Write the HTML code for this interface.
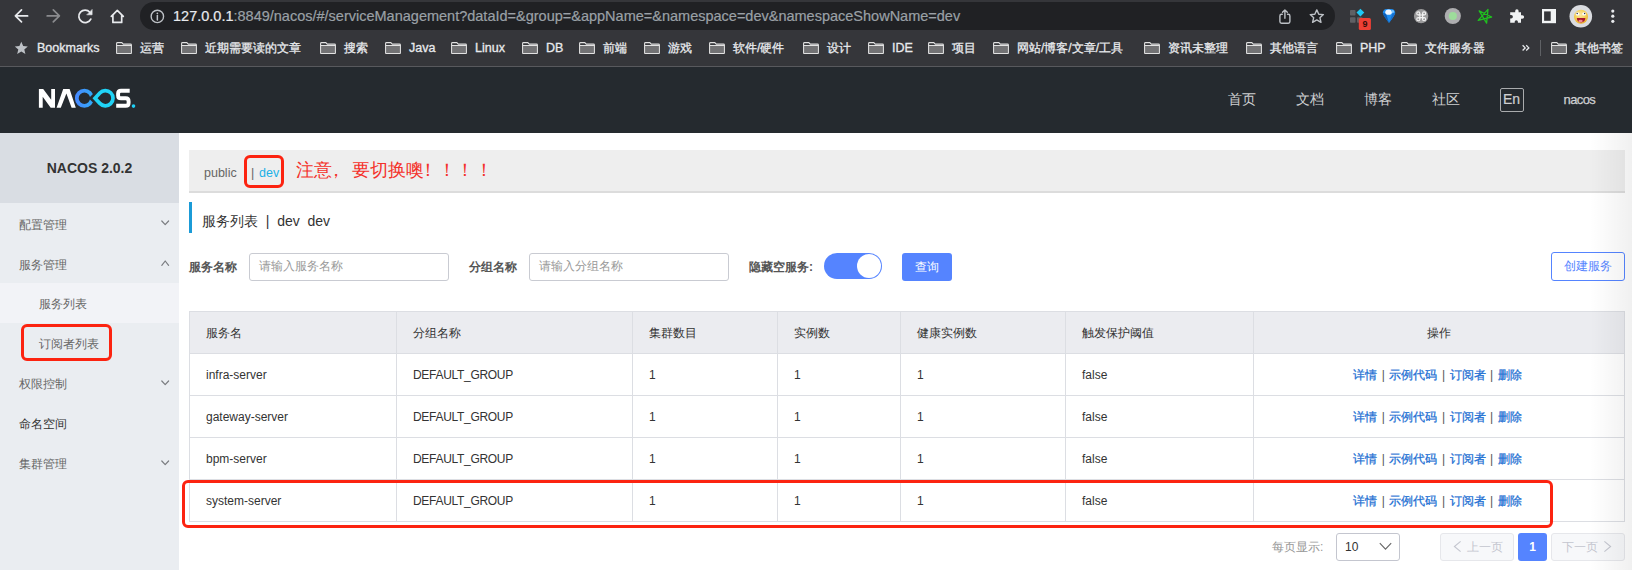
<!DOCTYPE html>
<html><head><meta charset="utf-8">
<style>
*{box-sizing:border-box;margin:0;padding:0}
html,body{width:1632px;height:570px;overflow:hidden;background:#fff;font-family:"Liberation Sans",sans-serif;position:relative}
.a{position:absolute;white-space:nowrap}
#tb{left:0;top:0;width:1632px;height:66px;background:#35363a}
#pill{left:140px;top:2px;width:1195px;height:28px;border-radius:14px;background:#202124}
#url{left:173px;top:4px;font-size:14.5px;line-height:24px;color:#9aa0a6;-webkit-text-stroke:0.2px #9aa0a6}
#url b{font-weight:normal;color:#e8eaed;-webkit-text-stroke:0.2px #e8eaed}
.bmt{top:40px;font-size:12px;line-height:16px;color:#e8eaed;-webkit-text-stroke:0.3px #e8eaed}
.bml{font-size:12.5px}
.fold{top:42px;width:16px;height:12px}
#sep{left:0;top:66px;width:1632px;height:1px;background:#58595d}
#hdr{left:0;top:67px;width:1632px;height:66px;background:#252a2f}
.nav{top:91px;font-size:14px;line-height:16px;color:#cfd0d2}
#side{left:0;top:133px;width:179px;height:437px;background:#eaedf1}
#sidetop{left:0;top:133px;width:179px;height:70px;background:#d9dde3}
#subsel{left:0;top:283px;width:179px;height:40px;background:#f2f3f7}
.sm{left:19px;font-size:12px;line-height:16px;color:#666}
.chev{left:161px;width:9px;height:6px}
#nsbar{left:189px;top:150px;width:1436px;height:43px;background:#eeeeee;border-bottom:2px solid #dcdcdc}
#titlebar{left:189px;top:202px;width:3px;height:30.5px;background:#1b9bd7}
.lbl{top:258.5px;font-size:12px;line-height:16px;color:#555;font-weight:bold}
.inp{top:253px;width:200px;height:28px;border:1px solid #c9cbd2;border-radius:3px;background:#fff}
.ph{top:258px;font-size:12px;line-height:16px;color:#999}
#toggle{left:824px;top:253px;width:58px;height:26px;border-radius:13px;background:#5584ff}
#knob{left:857px;top:254px;width:24px;height:24px;border-radius:12px;background:#fff}
#qbtn{left:902px;top:253px;width:50px;height:28px;border-radius:3px;background:#5584ff;color:#fff;font-size:12px;line-height:28px;text-align:center}
#cbtn{left:1551px;top:252px;width:74px;height:29px;border-radius:3px;border:1px solid #5584ff;background:#fff;color:#5584ff;font-size:12px;line-height:27px;text-align:center}
table{position:absolute;left:189px;top:311px;width:1436px;border-collapse:collapse;font-size:12px;color:#333;table-layout:fixed}
td,th{border:1px solid #dcdee3;height:42px;padding:1px 0 0 16px;text-align:left;font-weight:normal;white-space:nowrap}
th{background:#ebecf0;padding-top:1px}
.lk{color:#1d6fd3;-webkit-text-stroke:0.25px #1d6fd3}
.sp{margin:0 4.5px;color:#555}
.op{text-align:center;padding:1px 3px 0 0}
th.op{padding:1px 1px 0 0}
.rt{top:161px;font-size:18px;line-height:18px;color:#f4312a}
.redbox{border:3.3px solid #fc2310;border-radius:6px}
#shade{left:1590px;top:133px;width:42px;height:437px;background:linear-gradient(to right,rgba(0,0,0,0),rgba(0,0,0,0.06))}
</style></head><body>
<div id="tb" class="a"></div>
<div id="pill" class="a"></div>
<div id="url" class="a"><b>127.0.0.1</b>:8849/nacos/#/serviceManagement?dataId=&amp;group=&amp;appName=&amp;namespace=dev&amp;namespaceShowName=dev</div>
<!--BM-->
<svg class="a" style="left:0;top:0" width="1632" height="66" viewBox="0 0 1632 66">
<g fill="none" stroke-linecap="round" stroke-linejoin="round">
<path d="M27.6 15.9H15.6M21.5 9.9L15.4 15.9L21.5 21.9" stroke="#e8eaed" stroke-width="1.7"/>
<path d="M47.2 15.9H59.2M53.3 9.9L59.4 15.9L53.3 21.9" stroke="#8a8b8e" stroke-width="1.7"/>
<path d="M90.8 19.1A6.3 6.3 0 1 1 89.9 12.2" stroke="#e8eaed" stroke-width="1.7"/>
<path d="M92.1 9.8V14.8H87.1Z" fill="#e8eaed" stroke="#e8eaed" stroke-width="0.6"/>
<path d="M111.3 16.3L117.3 10.3L123.3 16.3M112.9 15.1V22.4H121.7V15.1" stroke="#e8eaed" stroke-width="1.7"/>
<circle cx="157.35" cy="16.45" r="6.2" stroke="#bdc1c6" stroke-width="1.4"/>
<path d="M157.35 15.6V19.9" stroke="#bdc1c6" stroke-width="1.5"/>
<circle cx="157.35" cy="13.3" r="0.9" fill="#bdc1c6" stroke="none"/>
<path d="M1282.3 14.3H1281.5Q1279.9 14.3 1279.9 15.9V21.6Q1279.9 23.2 1281.5 23.2H1288.3Q1289.9 23.2 1289.9 21.6V15.9Q1289.9 14.3 1288.3 14.3H1287.5" stroke="#bdc1c6" stroke-width="1.4"/>
<path d="M1284.9 18.3V10M1282.5 12.3L1284.9 9.9L1287.3 12.3" stroke="#bdc1c6" stroke-width="1.4"/>
<path d="M1316.8 9.9L1318.8 14.2L1323.4 14.6L1319.9 17.7L1321 22.3L1316.8 19.9L1312.6 22.3L1313.7 17.7L1310.2 14.6L1314.8 14.2Z" stroke="#bdc1c6" stroke-width="1.4"/>
</g>
<rect x="1350" y="10" width="5.5" height="5.6" rx="0.8" fill="#5f6064"/>
<rect x="1350" y="17.2" width="5.5" height="5.6" rx="0.8" fill="#5f6064"/>
<rect x="1357" y="17.2" width="5.5" height="5.6" rx="0.8" fill="#5f6064"/>
<path d="M1360.4 8.7L1364.3 12.6L1360.4 16.5L1356.5 12.6Z" fill="#1ec8f5"/>
<rect x="1358.8" y="18.1" width="12.1" height="11.8" rx="1.5" fill="#ef4035"/>
<text x="1364.9" y="27.4" font-size="9" font-weight="bold" font-family="Liberation Sans" text-anchor="middle" fill="#3a0d0a">9</text>
<path d="M1382.8 13Q1382.8 9.1 1386.6 8.9H1391.4Q1395.2 9.1 1395.2 13Q1395 15 1389 23Q1383 15 1382.8 13Z" fill="#1f8def"/>
<path d="M1382.8 13Q1383 15 1389 23L1386 13.5Z" fill="#0d5fb8"/>
<path d="M1395.2 13Q1395 15 1389 23L1392.5 13.5Z" fill="#1670d0"/>
<ellipse cx="1388.6" cy="12.2" rx="3.3" ry="2.6" fill="#f2f8ff"/>
<ellipse cx="1392.8" cy="11.5" rx="1.2" ry="1.6" fill="#7cc6ff"/>
<circle cx="1421.1" cy="16.1" r="7.2" fill="#9a9a9b"/>
<g fill="none" stroke="#f2f2f2" stroke-width="1.15"><circle cx="1418.3" cy="13.4" r="1.55"/><circle cx="1424.1000000000001" cy="13.4" r="1.55"/><circle cx="1418.3" cy="19.2" r="1.55"/><circle cx="1424.1000000000001" cy="19.2" r="1.55"/><path d="M1419.8500000000001 13.4V19.2M1422.55 13.4V19.2M1418.3 14.950000000000001H1424.1000000000001M1418.3 17.650000000000002H1424.1000000000001"/></g>
<circle cx="1452.8" cy="16" r="8.1" fill="#aeaeb0"/>
<circle cx="1452.8" cy="16" r="4.1" fill="#9ddc9b"/>
<path d="M1488 9.4L1486.6 23.1L1479.2 10.8L1491.6 17L1478.2 20.4Z" fill="none" stroke="#1fc11f" stroke-width="1.3" stroke-linejoin="round"/>
<path d="M1512.8 12.2H1515.2V10.9A1.7 1.7 0 0 1 1518.6 10.9V12.2H1521V15.2H1522.3A1.8 1.8 0 0 1 1522.3 18.8H1521V22.8H1517.9V21.8A1.6 1.6 0 0 0 1514.7 21.8V22.8H1510.2V18.5H1511.2A1.7 1.7 0 0 0 1511.2 15.1H1510.2V12.2Z" fill="#f1f3f4"/>
<rect x="1542" y="9" width="14" height="14.2" fill="#f1f3f4"/>
<rect x="1544.1" y="11.4" width="6.6" height="9.4" fill="#35363a"/>
<circle cx="1580.8" cy="16.2" r="11.3" fill="#dadce0"/>
<defs><radialGradient id="fg" cx="0.45" cy="0.35" r="0.65"><stop offset="0" stop-color="#fbe9a6"/><stop offset="0.6" stop-color="#f5cf55"/><stop offset="1" stop-color="#e9ad2c"/></radialGradient></defs>
<circle cx="1581" cy="16.8" r="7" fill="url(#fg)"/>
<ellipse cx="1577.6" cy="13.9" rx="1.9" ry="1.6" fill="#fff"/>
<ellipse cx="1584.1" cy="13.9" rx="1.9" ry="1.6" fill="#fff"/>
<circle cx="1577.2" cy="13.5" r="0.75" fill="#2a3550"/>
<circle cx="1584.6" cy="13.5" r="0.75" fill="#2a3550"/>
<path d="M1576.8 18.1H1585.4Q1585 22.4 1581.1 22.4Q1577.2 22.4 1576.8 18.1Z" fill="#a8172b"/>
<ellipse cx="1580.6" cy="21" rx="2.1" ry="1.2" fill="#f08a96"/>
<circle cx="1612.8" cy="11.1" r="1.6" fill="#e8eaed"/>
<circle cx="1612.8" cy="16.2" r="1.6" fill="#e8eaed"/>
<circle cx="1612.8" cy="21.3" r="1.6" fill="#e8eaed"/>
<path d="M1522.6 45.3l2.6 2.6-2.6 2.6M1526.2 45.3l2.6 2.6-2.6 2.6" fill="none" stroke="#e8eaed" stroke-width="1.3"/>
<rect x="1540" y="40" width="1" height="16" fill="#5f6165"/>
<path d="M21.3 41.7L23.2 46L27.8 46.4L24.3 49.4L25.4 53.9L21.3 51.5L17.2 53.9L18.3 49.4L14.8 46.4L19.4 46Z" fill="#bdc1c6"/>
</svg>
<div class="a bmt bml" style="left:37px">Bookmarks</div>
<svg class="a fold" style="left:116px" viewBox="0 0 16 12"><rect x="1.1" y="3.9" width="13.8" height="7.2" fill="#727274"/><path d="M1.5 0.6H5.8L7.3 2.1H14.5Q15.4 2.1 15.4 3V10.8Q15.4 11.6 14.6 11.6H1.4Q0.6 11.6 0.6 10.8V1.4Q0.6 0.6 1.5 0.6Z" fill="none" stroke="#e2e2e2" stroke-width="1.1"/><path d="M0.6 3.5H15.4" stroke="#e2e2e2" stroke-width="1"/></svg>
<div class="a bmt" style="left:140px">运营</div>
<svg class="a fold" style="left:181px" viewBox="0 0 16 12"><rect x="1.1" y="3.9" width="13.8" height="7.2" fill="#727274"/><path d="M1.5 0.6H5.8L7.3 2.1H14.5Q15.4 2.1 15.4 3V10.8Q15.4 11.6 14.6 11.6H1.4Q0.6 11.6 0.6 10.8V1.4Q0.6 0.6 1.5 0.6Z" fill="none" stroke="#e2e2e2" stroke-width="1.1"/><path d="M0.6 3.5H15.4" stroke="#e2e2e2" stroke-width="1"/></svg>
<div class="a bmt" style="left:205px">近期需要读的文章</div>
<svg class="a fold" style="left:320px" viewBox="0 0 16 12"><rect x="1.1" y="3.9" width="13.8" height="7.2" fill="#727274"/><path d="M1.5 0.6H5.8L7.3 2.1H14.5Q15.4 2.1 15.4 3V10.8Q15.4 11.6 14.6 11.6H1.4Q0.6 11.6 0.6 10.8V1.4Q0.6 0.6 1.5 0.6Z" fill="none" stroke="#e2e2e2" stroke-width="1.1"/><path d="M0.6 3.5H15.4" stroke="#e2e2e2" stroke-width="1"/></svg>
<div class="a bmt" style="left:344px">搜索</div>
<svg class="a fold" style="left:385px" viewBox="0 0 16 12"><rect x="1.1" y="3.9" width="13.8" height="7.2" fill="#727274"/><path d="M1.5 0.6H5.8L7.3 2.1H14.5Q15.4 2.1 15.4 3V10.8Q15.4 11.6 14.6 11.6H1.4Q0.6 11.6 0.6 10.8V1.4Q0.6 0.6 1.5 0.6Z" fill="none" stroke="#e2e2e2" stroke-width="1.1"/><path d="M0.6 3.5H15.4" stroke="#e2e2e2" stroke-width="1"/></svg>
<div class="a bmt bml" style="left:409px">Java</div>
<svg class="a fold" style="left:451px" viewBox="0 0 16 12"><rect x="1.1" y="3.9" width="13.8" height="7.2" fill="#727274"/><path d="M1.5 0.6H5.8L7.3 2.1H14.5Q15.4 2.1 15.4 3V10.8Q15.4 11.6 14.6 11.6H1.4Q0.6 11.6 0.6 10.8V1.4Q0.6 0.6 1.5 0.6Z" fill="none" stroke="#e2e2e2" stroke-width="1.1"/><path d="M0.6 3.5H15.4" stroke="#e2e2e2" stroke-width="1"/></svg>
<div class="a bmt bml" style="left:475px">Linux</div>
<svg class="a fold" style="left:522px" viewBox="0 0 16 12"><rect x="1.1" y="3.9" width="13.8" height="7.2" fill="#727274"/><path d="M1.5 0.6H5.8L7.3 2.1H14.5Q15.4 2.1 15.4 3V10.8Q15.4 11.6 14.6 11.6H1.4Q0.6 11.6 0.6 10.8V1.4Q0.6 0.6 1.5 0.6Z" fill="none" stroke="#e2e2e2" stroke-width="1.1"/><path d="M0.6 3.5H15.4" stroke="#e2e2e2" stroke-width="1"/></svg>
<div class="a bmt bml" style="left:546px">DB</div>
<svg class="a fold" style="left:579px" viewBox="0 0 16 12"><rect x="1.1" y="3.9" width="13.8" height="7.2" fill="#727274"/><path d="M1.5 0.6H5.8L7.3 2.1H14.5Q15.4 2.1 15.4 3V10.8Q15.4 11.6 14.6 11.6H1.4Q0.6 11.6 0.6 10.8V1.4Q0.6 0.6 1.5 0.6Z" fill="none" stroke="#e2e2e2" stroke-width="1.1"/><path d="M0.6 3.5H15.4" stroke="#e2e2e2" stroke-width="1"/></svg>
<div class="a bmt" style="left:603px">前端</div>
<svg class="a fold" style="left:644px" viewBox="0 0 16 12"><rect x="1.1" y="3.9" width="13.8" height="7.2" fill="#727274"/><path d="M1.5 0.6H5.8L7.3 2.1H14.5Q15.4 2.1 15.4 3V10.8Q15.4 11.6 14.6 11.6H1.4Q0.6 11.6 0.6 10.8V1.4Q0.6 0.6 1.5 0.6Z" fill="none" stroke="#e2e2e2" stroke-width="1.1"/><path d="M0.6 3.5H15.4" stroke="#e2e2e2" stroke-width="1"/></svg>
<div class="a bmt" style="left:668px">游戏</div>
<svg class="a fold" style="left:709px" viewBox="0 0 16 12"><rect x="1.1" y="3.9" width="13.8" height="7.2" fill="#727274"/><path d="M1.5 0.6H5.8L7.3 2.1H14.5Q15.4 2.1 15.4 3V10.8Q15.4 11.6 14.6 11.6H1.4Q0.6 11.6 0.6 10.8V1.4Q0.6 0.6 1.5 0.6Z" fill="none" stroke="#e2e2e2" stroke-width="1.1"/><path d="M0.6 3.5H15.4" stroke="#e2e2e2" stroke-width="1"/></svg>
<div class="a bmt" style="left:733px">软件/硬件</div>
<svg class="a fold" style="left:803px" viewBox="0 0 16 12"><rect x="1.1" y="3.9" width="13.8" height="7.2" fill="#727274"/><path d="M1.5 0.6H5.8L7.3 2.1H14.5Q15.4 2.1 15.4 3V10.8Q15.4 11.6 14.6 11.6H1.4Q0.6 11.6 0.6 10.8V1.4Q0.6 0.6 1.5 0.6Z" fill="none" stroke="#e2e2e2" stroke-width="1.1"/><path d="M0.6 3.5H15.4" stroke="#e2e2e2" stroke-width="1"/></svg>
<div class="a bmt" style="left:827px">设计</div>
<svg class="a fold" style="left:868px" viewBox="0 0 16 12"><rect x="1.1" y="3.9" width="13.8" height="7.2" fill="#727274"/><path d="M1.5 0.6H5.8L7.3 2.1H14.5Q15.4 2.1 15.4 3V10.8Q15.4 11.6 14.6 11.6H1.4Q0.6 11.6 0.6 10.8V1.4Q0.6 0.6 1.5 0.6Z" fill="none" stroke="#e2e2e2" stroke-width="1.1"/><path d="M0.6 3.5H15.4" stroke="#e2e2e2" stroke-width="1"/></svg>
<div class="a bmt bml" style="left:892px">IDE</div>
<svg class="a fold" style="left:928px" viewBox="0 0 16 12"><rect x="1.1" y="3.9" width="13.8" height="7.2" fill="#727274"/><path d="M1.5 0.6H5.8L7.3 2.1H14.5Q15.4 2.1 15.4 3V10.8Q15.4 11.6 14.6 11.6H1.4Q0.6 11.6 0.6 10.8V1.4Q0.6 0.6 1.5 0.6Z" fill="none" stroke="#e2e2e2" stroke-width="1.1"/><path d="M0.6 3.5H15.4" stroke="#e2e2e2" stroke-width="1"/></svg>
<div class="a bmt" style="left:952px">项目</div>
<svg class="a fold" style="left:993px" viewBox="0 0 16 12"><rect x="1.1" y="3.9" width="13.8" height="7.2" fill="#727274"/><path d="M1.5 0.6H5.8L7.3 2.1H14.5Q15.4 2.1 15.4 3V10.8Q15.4 11.6 14.6 11.6H1.4Q0.6 11.6 0.6 10.8V1.4Q0.6 0.6 1.5 0.6Z" fill="none" stroke="#e2e2e2" stroke-width="1.1"/><path d="M0.6 3.5H15.4" stroke="#e2e2e2" stroke-width="1"/></svg>
<div class="a bmt" style="left:1017px">网站/博客/文章/工具</div>
<svg class="a fold" style="left:1144px" viewBox="0 0 16 12"><rect x="1.1" y="3.9" width="13.8" height="7.2" fill="#727274"/><path d="M1.5 0.6H5.8L7.3 2.1H14.5Q15.4 2.1 15.4 3V10.8Q15.4 11.6 14.6 11.6H1.4Q0.6 11.6 0.6 10.8V1.4Q0.6 0.6 1.5 0.6Z" fill="none" stroke="#e2e2e2" stroke-width="1.1"/><path d="M0.6 3.5H15.4" stroke="#e2e2e2" stroke-width="1"/></svg>
<div class="a bmt" style="left:1168px">资讯未整理</div>
<svg class="a fold" style="left:1246px" viewBox="0 0 16 12"><rect x="1.1" y="3.9" width="13.8" height="7.2" fill="#727274"/><path d="M1.5 0.6H5.8L7.3 2.1H14.5Q15.4 2.1 15.4 3V10.8Q15.4 11.6 14.6 11.6H1.4Q0.6 11.6 0.6 10.8V1.4Q0.6 0.6 1.5 0.6Z" fill="none" stroke="#e2e2e2" stroke-width="1.1"/><path d="M0.6 3.5H15.4" stroke="#e2e2e2" stroke-width="1"/></svg>
<div class="a bmt" style="left:1270px">其他语言</div>
<svg class="a fold" style="left:1336px" viewBox="0 0 16 12"><rect x="1.1" y="3.9" width="13.8" height="7.2" fill="#727274"/><path d="M1.5 0.6H5.8L7.3 2.1H14.5Q15.4 2.1 15.4 3V10.8Q15.4 11.6 14.6 11.6H1.4Q0.6 11.6 0.6 10.8V1.4Q0.6 0.6 1.5 0.6Z" fill="none" stroke="#e2e2e2" stroke-width="1.1"/><path d="M0.6 3.5H15.4" stroke="#e2e2e2" stroke-width="1"/></svg>
<div class="a bmt bml" style="left:1360px">PHP</div>
<svg class="a fold" style="left:1401px" viewBox="0 0 16 12"><rect x="1.1" y="3.9" width="13.8" height="7.2" fill="#727274"/><path d="M1.5 0.6H5.8L7.3 2.1H14.5Q15.4 2.1 15.4 3V10.8Q15.4 11.6 14.6 11.6H1.4Q0.6 11.6 0.6 10.8V1.4Q0.6 0.6 1.5 0.6Z" fill="none" stroke="#e2e2e2" stroke-width="1.1"/><path d="M0.6 3.5H15.4" stroke="#e2e2e2" stroke-width="1"/></svg>
<div class="a bmt" style="left:1425px">文件服务器</div>
<svg class="a fold" style="left:1551px" viewBox="0 0 16 12"><rect x="1.1" y="3.9" width="13.8" height="7.2" fill="#727274"/><path d="M1.5 0.6H5.8L7.3 2.1H14.5Q15.4 2.1 15.4 3V10.8Q15.4 11.6 14.6 11.6H1.4Q0.6 11.6 0.6 10.8V1.4Q0.6 0.6 1.5 0.6Z" fill="none" stroke="#e2e2e2" stroke-width="1.1"/><path d="M0.6 3.5H15.4" stroke="#e2e2e2" stroke-width="1"/></svg>
<div class="a bmt" style="left:1575px">其他书签</div>
<div id="sep" class="a"></div>
<div id="hdr" class="a"></div>
<svg class="a" style="left:0;top:67px" width="200" height="66" viewBox="0 67 200 66">
<defs><linearGradient id="cg" x1="0" x2="1" y1="0" y2="0"><stop offset="0" stop-color="#468bff"/><stop offset="1" stop-color="#33a8f8"/></linearGradient></defs>
<path d="M38.9 107.7V88.9H43.2L51.2 99.8V88.9H55V107.7H50.7L42.7 96.8V107.7Z" fill="#fff"/>
<path d="M56.6 107.7L63.2 88.9H69.6L75.8 107.7H71.6L66.4 93.6L60.8 107.7Z" fill="#fff"/>
<circle cx="84.4" cy="98.2" r="7.6" fill="none" stroke="url(#cg)" stroke-width="3.8"/>
<path d="M88.7 98.2L98.5 88.4V108Z" fill="#252a2f"/>
<path d="M95 98.2L99.84 93.02A7.6 7.6 0 1 1 99.84 103.38Z" fill="none" stroke="#20d3f6" stroke-width="3.7" stroke-linejoin="miter"/>
<path d="M129.7 90.8H121Q118.1 90.8 118.1 93.6V95.4Q118.1 98.3 121 98.3H125.7Q128.6 98.3 128.6 101.2V102.9Q128.6 105.8 125.7 105.8H116.2" fill="none" stroke="#fff" stroke-width="3.9"/>
<circle cx="133.5" cy="106.1" r="1.8" fill="#1fd0f6"/>
</svg>
<div class="a nav" style="left:1228px">首页</div>
<div class="a nav" style="left:1296px">文档</div>
<div class="a nav" style="left:1364px">博客</div>
<div class="a nav" style="left:1432px">社区</div>
<div class="a" style="left:1500px;top:88px;width:24px;height:24px;border:1px solid #a9abad;border-radius:2px"></div>
<div class="a" style="left:1503px;top:91px;font-size:14px;line-height:16px;color:#cfd0d2;-webkit-text-stroke:0.2px #cfd0d2">En</div>
<div class="a" style="left:1563.5px;top:91.5px;font-size:13px;line-height:16px;letter-spacing:-0.6px;color:#cfd0d2;-webkit-text-stroke:0.25px #cfd0d2">nacos</div>
<div id="side" class="a"></div>
<div id="sidetop" class="a"></div>
<div id="subsel" class="a"></div>
<div class="a" style="left:0;top:160px;width:179px;text-align:center;font-size:14px;line-height:16px;font-weight:bold;color:#333">NACOS 2.0.2</div>
<div class="a sm" style="top:217px">配置管理</div>
<div class="a sm" style="top:257px">服务管理</div>
<div class="a sm" style="top:296px;left:39px">服务列表</div>
<div class="a sm" style="top:336px;left:39px">订阅者列表</div>
<div class="a sm" style="top:376px">权限控制</div>
<div class="a sm" style="top:415.5px;color:#333">命名空间</div>
<div class="a sm" style="top:456px">集群管理</div>
<div class="a redbox" style="left:21px;top:324px;width:91px;height:37px"></div>

<div id="nsbar" class="a"></div>
<div class="a" style="left:204px;top:165px;font-size:12.5px;line-height:16px;color:#666">public</div>
<div class="a" style="left:251px;top:165px;font-size:12.5px;line-height:16px;color:#666">|</div>
<div class="a" style="left:259px;top:165px;font-size:12.5px;line-height:16px;color:#1ab1e6">dev</div>
<div class="a redbox" style="left:244px;top:155px;width:40px;height:33px"></div>
<div class="a rt" style="left:296px">注意</div>
<div class="a rt" id="rc" style="left:326.5px">，</div>
<div class="a rt" style="left:351.5px">要切换噢</div>
<div class="a rt ex" style="left:419px">！</div>
<div class="a rt ex" style="left:437.7px">！</div>
<div class="a rt ex" style="left:456.4px">！</div>
<div class="a rt ex" style="left:475px">！</div>
<div id="titlebar" class="a"></div>
<div class="a" style="left:202px;top:213px;font-size:14px;line-height:16px;color:#333">服务列表 &nbsp;|&nbsp; dev &nbsp;dev</div>

<div class="a lbl" style="left:189px">服务名称</div>
<div class="a inp" style="left:249px"></div>
<div class="a ph" style="left:259px">请输入服务名称</div>
<div class="a lbl" style="left:469px">分组名称</div>
<div class="a inp" style="left:529px"></div>
<div class="a ph" style="left:539px">请输入分组名称</div>
<div class="a lbl" style="left:749px">隐藏空服务:</div>
<div id="toggle" class="a"></div>
<div id="knob" class="a"></div>
<div id="qbtn" class="a">查询</div>
<div id="cbtn" class="a">创建服务</div>

<table>
<colgroup><col style="width:207px"><col style="width:236px"><col style="width:145px"><col style="width:123px"><col style="width:165px"><col style="width:188px"><col></colgroup>
<tr><th>服务名</th><th>分组名称</th><th>集群数目</th><th>实例数</th><th>健康实例数</th><th>触发保护阈值</th><th class="op">操作</th></tr>
<tr><td>infra-server</td><td style="letter-spacing:-0.3px">DEFAULT_GROUP</td><td>1</td><td>1</td><td>1</td><td>false</td><td class="op"><span class="lk">详情</span><span class="sp">|</span><span class="lk">示例代码</span><span class="sp">|</span><span class="lk">订阅者</span><span class="sp">|</span><span class="lk">删除</span></td></tr>
<tr><td>gateway-server</td><td style="letter-spacing:-0.3px">DEFAULT_GROUP</td><td>1</td><td>1</td><td>1</td><td>false</td><td class="op"><span class="lk">详情</span><span class="sp">|</span><span class="lk">示例代码</span><span class="sp">|</span><span class="lk">订阅者</span><span class="sp">|</span><span class="lk">删除</span></td></tr>
<tr><td>bpm-server</td><td style="letter-spacing:-0.3px">DEFAULT_GROUP</td><td>1</td><td>1</td><td>1</td><td>false</td><td class="op"><span class="lk">详情</span><span class="sp">|</span><span class="lk">示例代码</span><span class="sp">|</span><span class="lk">订阅者</span><span class="sp">|</span><span class="lk">删除</span></td></tr>
<tr><td>system-server</td><td style="letter-spacing:-0.3px">DEFAULT_GROUP</td><td>1</td><td>1</td><td>1</td><td>false</td><td class="op"><span class="lk">详情</span><span class="sp">|</span><span class="lk">示例代码</span><span class="sp">|</span><span class="lk">订阅者</span><span class="sp">|</span><span class="lk">删除</span></td></tr>
</table>
<div class="a redbox" style="left:181.5px;top:480px;width:1371px;height:48px;border-width:3.1px"></div>

<svg class="a" style="left:0;top:133px" width="179" height="437" viewBox="0 133 179 437">
<g fill="none" stroke="#7a7c80" stroke-width="1.2" stroke-linecap="round" stroke-linejoin="round">
<path d="M161.8 221L165.2 224.6L168.6 221"/>
<path d="M161.8 265.4L165.2 261L168.6 265.4"/>
<path d="M161.8 381L165.2 384.6L168.6 381"/>
<path d="M161.8 461L165.2 464.6L168.6 461"/>
</g></svg>
<div class="a" style="left:1272px;top:539px;font-size:12px;line-height:16px;color:#999">每页显示:</div>
<div class="a" style="left:1336px;top:533px;width:64px;height:28px;border:1px solid #c4c6cf;border-radius:3px;background:#fff"></div>
<div class="a" style="left:1345px;top:539px;font-size:12px;line-height:16px;color:#333">10</div>
<svg class="a" style="left:1378px;top:541px" width="15" height="11" viewBox="0 0 15 11"><path d="M1.8 2.2L7.5 8.2L13.2 2.2" fill="none" stroke="#666" stroke-width="1.1"/></svg>
<div class="a" style="left:1440px;top:533px;width:74px;height:28px;border:1px solid #e6e7eb;border-radius:3px;background:#f7f8fa"></div>
<div class="a" style="left:1467px;top:539px;font-size:12px;line-height:16px;color:#c4c6cf">上一页</div>
<svg class="a" style="left:1452px;top:540px" width="11" height="13" viewBox="0 0 11 13"><path d="M8.6 1.3L2.4 6.5L8.6 11.7" fill="none" stroke="#c4c6cf" stroke-width="1.1"/></svg>
<div class="a" style="left:1518px;top:533px;width:29px;height:28px;border-radius:3px;background:#5584ff;color:#fff;font-size:12px;line-height:28px;text-align:center;font-weight:bold">1</div>
<div class="a" style="left:1551px;top:533px;width:74px;height:28px;border:1px solid #e6e7eb;border-radius:3px;background:#f7f8fa"></div>
<div class="a" style="left:1562px;top:539px;font-size:12px;line-height:16px;color:#c4c6cf">下一页</div>
<svg class="a" style="left:1602px;top:540px" width="11" height="13" viewBox="0 0 11 13"><path d="M2.4 1.3L8.6 6.5L2.4 11.7" fill="none" stroke="#c4c6cf" stroke-width="1.1"/></svg>
<div id="shade" class="a"></div>
</body></html>
